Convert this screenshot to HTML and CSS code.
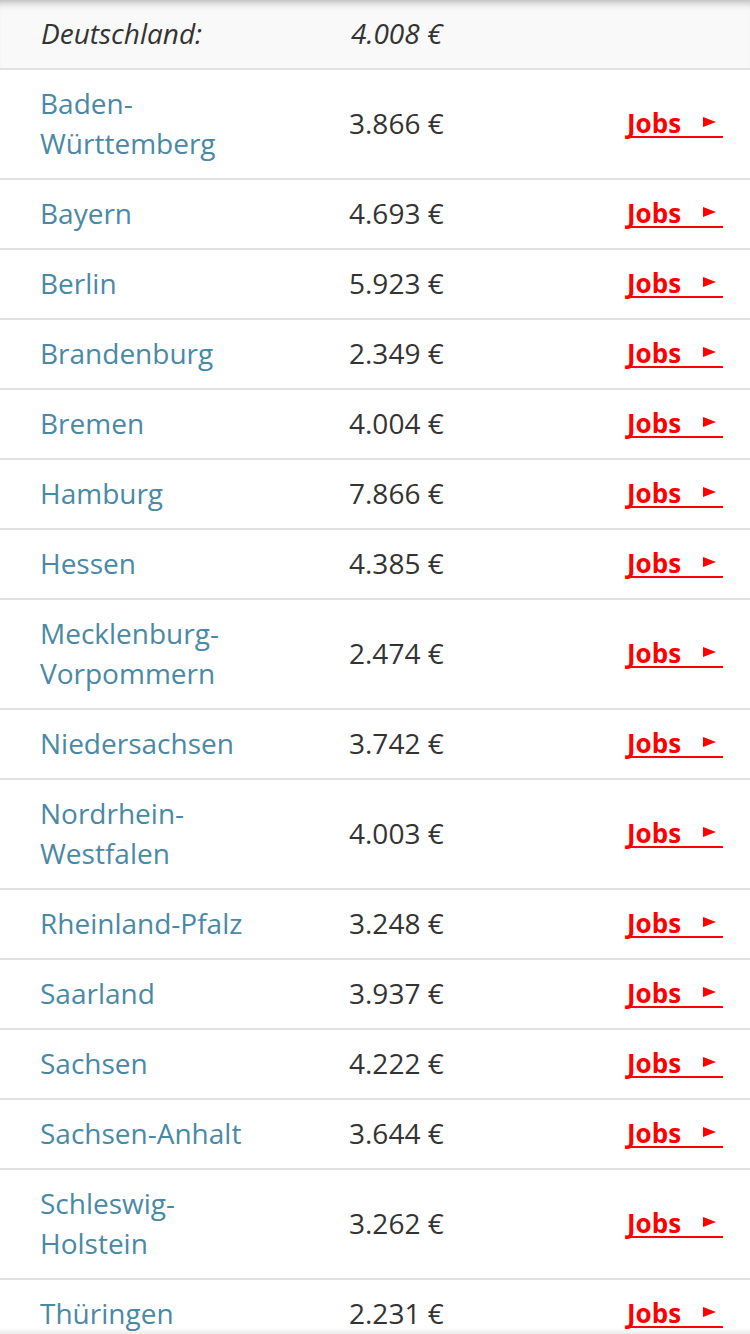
FILE: index.html
```html
<!DOCTYPE html>
<html lang="de">

<head>
    <meta charset="UTF-8">
    <meta name="viewport" content="width=device-width, initial-scale=1.0">
    <title>Gehalt nach Bundesland</title>
    <link rel="stylesheet" href="styles.css">
</head>

<body>
    <div class="salary-table">
        <div class="row total">
            <span class="name">Deutschland:</span>
            <span class="value">4.008 €</span>
            <span></span>
        </div>
        <div class="row"><a class="name" href="#">Baden-<br>Württemberg</a><span class="value">3.866 €</span><a class="jobs" href="#">Jobs<i class="arrow"></i></a></div>
        <div class="row"><a class="name" href="#">Bayern</a><span class="value">4.693 €</span><a class="jobs" href="#">Jobs<i class="arrow"></i></a></div>
        <div class="row"><a class="name" href="#">Berlin</a><span class="value">5.923 €</span><a class="jobs" href="#">Jobs<i class="arrow"></i></a></div>
        <div class="row"><a class="name" href="#">Brandenburg</a><span class="value">2.349 €</span><a class="jobs" href="#">Jobs<i class="arrow"></i></a></div>
        <div class="row"><a class="name" href="#">Bremen</a><span class="value">4.004 €</span><a class="jobs" href="#">Jobs<i class="arrow"></i></a></div>
        <div class="row"><a class="name" href="#">Hamburg</a><span class="value">7.866 €</span><a class="jobs" href="#">Jobs<i class="arrow"></i></a></div>
        <div class="row"><a class="name" href="#">Hessen</a><span class="value">4.385 €</span><a class="jobs" href="#">Jobs<i class="arrow"></i></a></div>
        <div class="row"><a class="name" href="#">Mecklenburg-<br>Vorpommern</a><span class="value">2.474 €</span><a class="jobs" href="#">Jobs<i class="arrow"></i></a></div>
        <div class="row"><a class="name" href="#">Niedersachsen</a><span class="value">3.742 €</span><a class="jobs" href="#">Jobs<i class="arrow"></i></a></div>
        <div class="row"><a class="name" href="#">Nordrhein-<br>Westfalen</a><span class="value">4.003 €</span><a class="jobs" href="#">Jobs<i class="arrow"></i></a></div>
        <div class="row"><a class="name" href="#">Rheinland-Pfalz</a><span class="value">3.248 €</span><a class="jobs" href="#">Jobs<i class="arrow"></i></a></div>
        <div class="row"><a class="name" href="#">Saarland</a><span class="value">3.937 €</span><a class="jobs" href="#">Jobs<i class="arrow"></i></a></div>
        <div class="row"><a class="name" href="#">Sachsen</a><span class="value">4.222 €</span><a class="jobs" href="#">Jobs<i class="arrow"></i></a></div>
        <div class="row"><a class="name" href="#">Sachsen-Anhalt</a><span class="value">3.644 €</span><a class="jobs" href="#">Jobs<i class="arrow"></i></a></div>
        <div class="row"><a class="name" href="#">Schleswig-<br>Holstein</a><span class="value">3.262 €</span><a class="jobs" href="#">Jobs<i class="arrow"></i></a></div>
        <div class="row"><a class="name" href="#">Thüringen</a><span class="value">2.231 €</span><a class="jobs" href="#">Jobs<i class="arrow"></i></a></div>
    </div>
    <div class="bottom-shade"></div>
</body>

</html>
```

FILE: styles.css
```css
body {
    margin: 0;
    background-color: #fff;
    font-family: "Open Sans", "Liberation Sans", sans-serif;
    color: #333;
}

.salary-table {
    display: flex;
    flex-direction: column;
}

.row {
    display: grid;
    grid-template-columns: 309px 1fr auto;
    align-items: center;
    padding: 13px 27px 15px 40px;
    border-bottom: 2px solid #e2e2e2;
    font-size: 28px;
    line-height: 40px;
}

.row .name {
    color: #4a89a5;
    text-decoration: none;
}

.row .value {
    color: #333;
}

.total {
    background-color: #f9f9f9;
    box-shadow: inset 0 9px 8px -7px rgba(0, 0, 0, 0.3);
    font-style: italic;
    padding-left: 41px;
}

.total .name {
    color: #333;
}

.total .value {
    padding-left: 1px;
}

.jobs {
    display: flex;
    align-items: center;
    justify-content: space-between;
    width: 96px;
    box-sizing: border-box;
    margin-top: 2px;
    padding: 0 7px 0 0;
    border-bottom: 2px solid #f00;
    color: #f00;
    font-weight: 700;
    font-size: 26px;
    line-height: 26px;
    text-decoration: none;
}

.arrow {
    width: 0;
    height: 0;
    margin-top: -3px;
    border-top: 5px solid transparent;
    border-bottom: 5px solid transparent;
    border-left: 13px solid #f00;
}

.bottom-shade {
    position: fixed;
    left: 0;
    right: 0;
    bottom: 0;
    height: 6px;
    background: linear-gradient(rgba(0, 0, 0, 0), rgba(0, 0, 0, 0.08));
}
```
